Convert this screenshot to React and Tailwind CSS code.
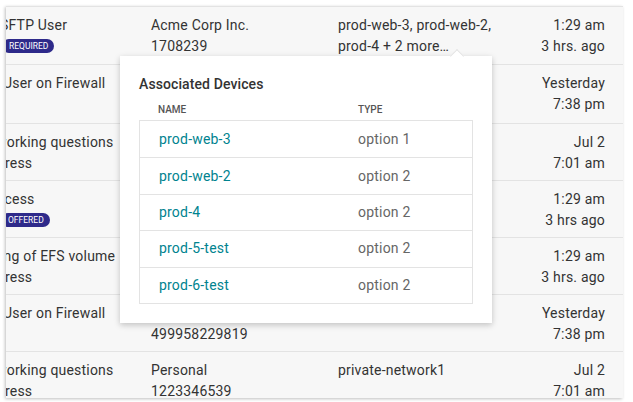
import React from "react";

const rows = [
  {
    h: "h-[58px]",
    c1: [{ t: "SFTP User", ml: "ml-[-6px]" }],
    badge: { t: "REQUIRED", ml: "ml-[-4px]" },
    c2: ["Acme Corp Inc.", "1708239"],
    c3: ["prod-web-3, prod-web-2,", "prod-4 + 2 more…"],
    c4: ["1:29 am", "3 hrs. ago"],
  },
  {
    h: "h-[59px]",
    c1: [{ t: "User on Firewall", ml: "ml-[-3px]" }],
    c2: ["Acme Corp Inc.", "1708239"],
    c3: [],
    c4: ["Yesterday", "7:38 pm"],
  },
  {
    h: "h-[57px]",
    c1: [
      { t: "working questions", ml: "ml-[-10px]" },
      { t: "ress", ml: "ml-[-1px]" },
    ],
    c2: [],
    c3: [],
    c4: ["Jul 2", "7:01 am"],
  },
  {
    h: "h-[57px]",
    c1: [{ t: "ccess", ml: "ml-[-9px]" }],
    badge: { t: "OFFERED", ml: "ml-[-5px]" },
    c2: [],
    c3: [],
    c4: ["1:29 am", "3 hrs ago"],
  },
  {
    h: "h-[57px]",
    c1: [
      { t: "ing of EFS volume", ml: "ml-[-6px]" },
      { t: "ress", ml: "ml-[-1px]" },
    ],
    c2: [],
    c3: [],
    c4: ["1:29 am", "3 hrs. ago"],
  },
  {
    h: "h-[57px]",
    c1: [{ t: "User on Firewall", ml: "ml-[-3px]" }],
    c2: ["Acme Corp Inc.", "499958229819"],
    c3: [],
    c4: ["Yesterday", "7:38 pm"],
  },
  {
    h: "h-[57px]",
    c1: [
      { t: "working questions", ml: "ml-[-10px]" },
      { t: "ress", ml: "ml-[-1px]" },
    ],
    c2: ["Personal", "1223346539"],
    c3: ["private-network1"],
    c4: ["Jul 2", "7:01 am"],
  },
];

const devices = [
  ["prod-web-3", "option 1"],
  ["prod-web-2", "option 2"],
  ["prod-4", "option 2"],
  ["prod-5-test", "option 2"],
  ["prod-6-test", "option 2"],
];

function Row({ row }) {
  return (
    <div className={`flex ${row.h} border-b border-[#e3e3e3] pt-[8px] text-[14px] leading-[21px] tracking-[0.2px] text-[#333]`}>
      <div className="w-[145px] shrink-0 whitespace-nowrap">
        {row.c1.map((l, i) => (
          <div key={i} className={l.ml}>
            {l.t}
          </div>
        ))}
        {row.badge && (
          <div className={`${row.badge.ml} mt-[3px] flex`}>
            <span className="rounded-full bg-[#2e2a8a] pl-[7px] pr-[6px] text-[8.5px] leading-[14px] tracking-normal text-white">
              {row.badge.t}
            </span>
          </div>
        )}
      </div>
      <div className="w-[187px] shrink-0">
        {row.c2.map((t, i) => (
          <div key={i}>{t}</div>
        ))}
      </div>
      <div className="flex-1">
        {row.c3.map((t, i) => (
          <div key={i}>{t}</div>
        ))}
      </div>
      <div className="pr-[18px] text-right">
        {row.c4.map((t, i) => (
          <div key={i}>{t}</div>
        ))}
      </div>
    </div>
  );
}

export default function App() {
  return (
    <div className="relative h-[402px] w-[633px] overflow-hidden bg-white font-['Roboto',sans-serif]">
      <div className="ml-[6px] mt-[6px] h-[392px] w-[617px] overflow-hidden border-t border-[#e3e3e3] bg-[#f7f7f7] shadow-[-1px_1px_3px_rgba(0,0,0,0.25)]">
        {rows.map((r, i) => (
          <Row key={i} row={r} />
        ))}
      </div>

      {/* Associated devices popover */}
      <div className="absolute left-[120px] top-[56px] w-[372px] bg-white px-[19px] pb-[19px] pt-[18px] shadow-[0_2px_6px_rgba(0,0,0,0.22)]">
        <div className="absolute left-[332px] top-[-5px] h-[10px] w-[10px] rotate-45 border-l border-t border-[#e3e3e3] bg-white" />
        <div className="text-[14px] font-medium leading-[20px] tracking-[0.1px] text-[#333]">Associated Devices</div>
        <div className="mt-[10px] flex text-[10px] font-medium leading-[12px] text-[#555]">
          <div className="w-[219px] pl-[19px]">NAME</div>
          <div>TYPE</div>
        </div>
        <div className="mt-[4px] border border-[#e3e3e3]">
          {devices.map(([n, t], i) => (
            <div
              key={n}
              className={`flex h-[36.4px] items-center text-[14px] tracking-[0.2px] ${i > 0 ? "border-t border-[#e3e3e3]" : ""}`}
            >
              <div className="w-[218px] pl-[19px] text-[#00838f]">{n}</div>
              <div className="text-[#666]">{t}</div>
            </div>
          ))}
        </div>
      </div>
    </div>
  );
}
